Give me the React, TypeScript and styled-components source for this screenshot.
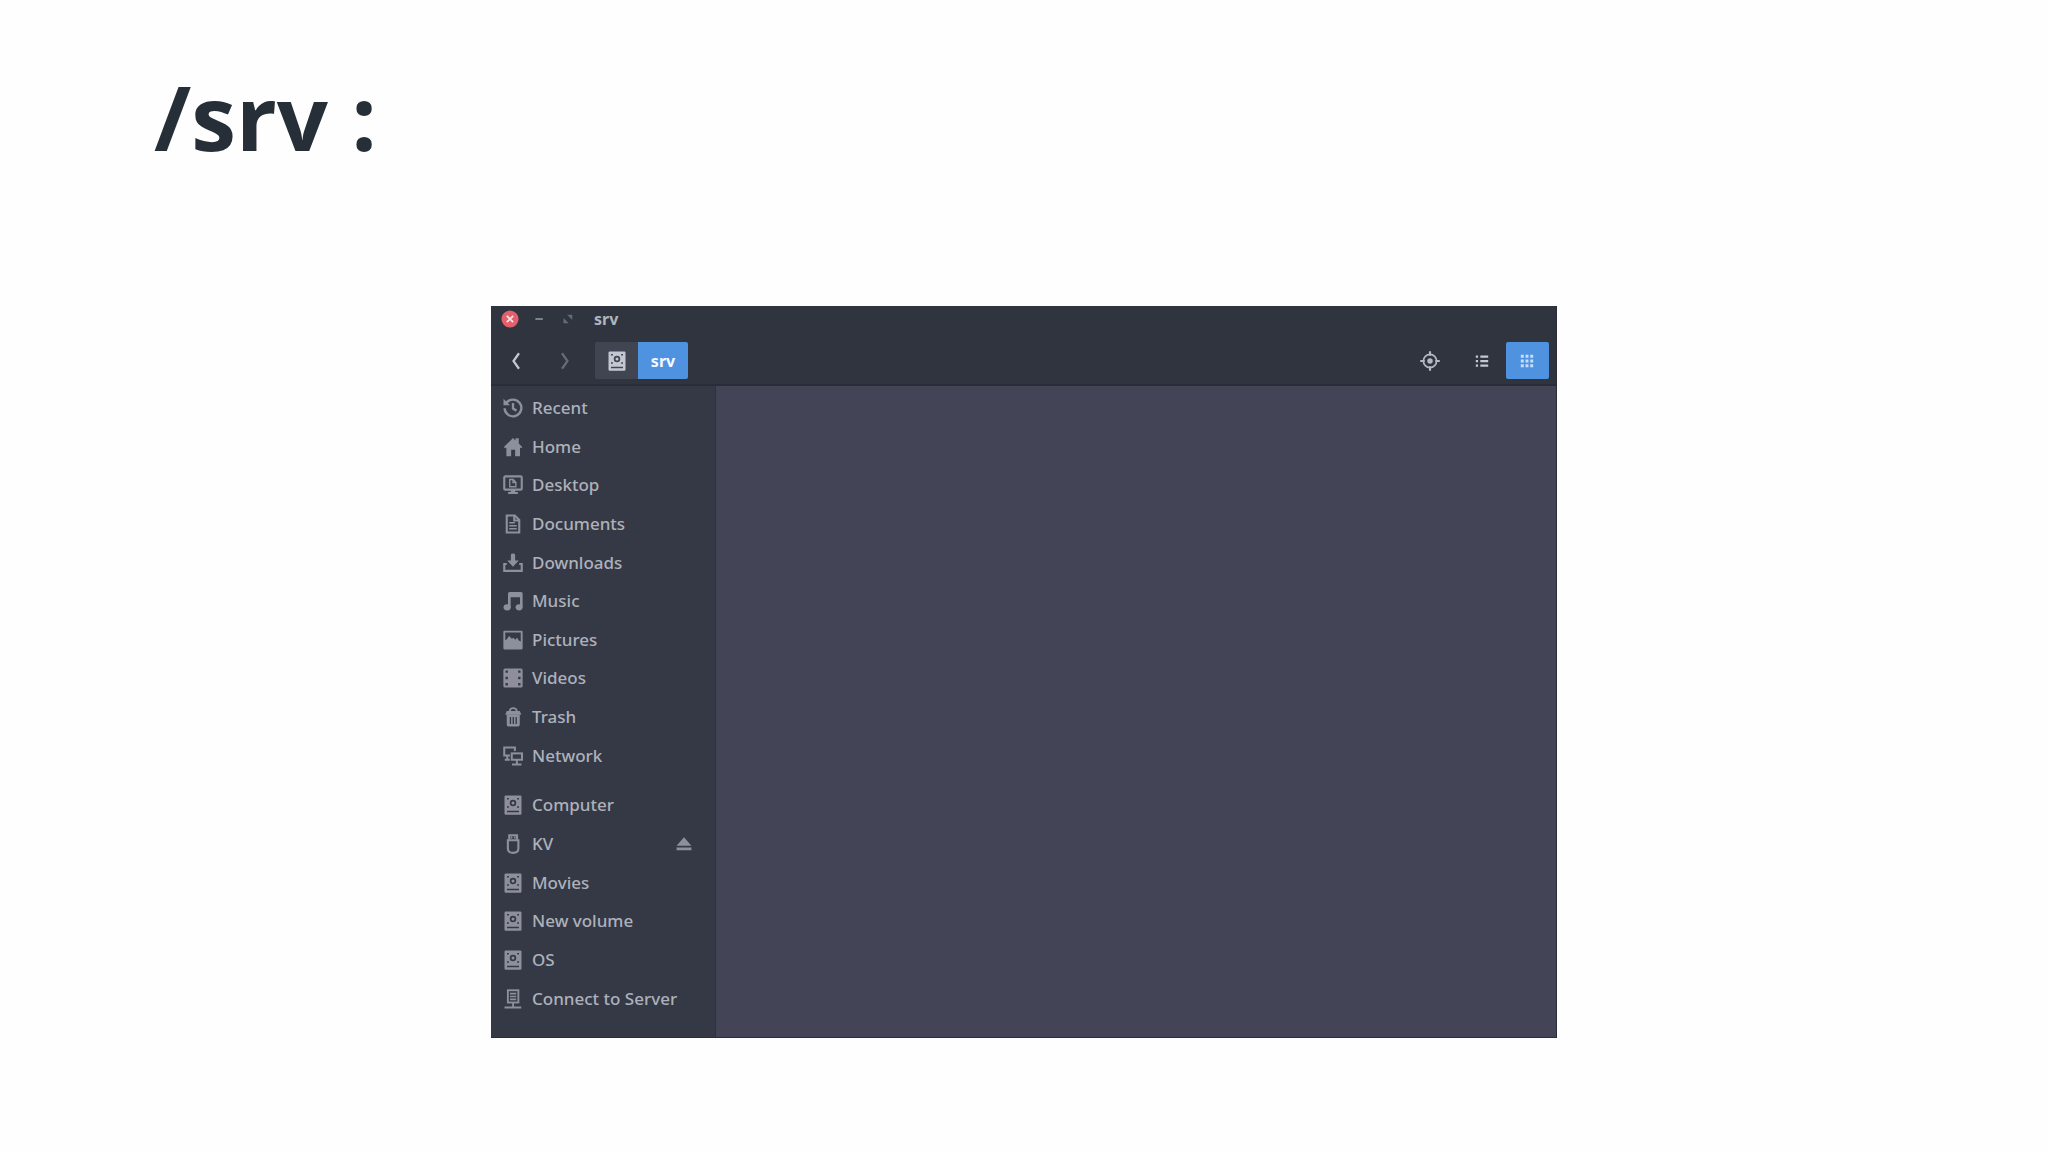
import React from "react";
import styled, { createGlobalStyle } from "styled-components";

const GlobalStyle = createGlobalStyle`
  *, *::before, *::after { box-sizing: border-box; }
  body {
    margin: 0;
    background: #fefefe;
    font-family: "Noto Sans", "Open Sans", sans-serif;
  }
  button { font: inherit; border: 0; padding: 0; background: none; cursor: pointer; }
`;

const Slide = styled.main`
  min-height: 100vh;
  padding: 56px 0;
`;

const Heading = styled.h1`
  margin: 0 0 130px;
  padding-left: 154px;
  font-family: "Open Sans", "Noto Sans", sans-serif;
  font-size: 90px;
  line-height: 120px;
  font-weight: 700;
  color: #262f38;
`;

const Window = styled.section`
  width: calc(52% + 1px);
  min-width: 640px;
  margin: 0 auto;
  background: #434455;
  border: solid #2a2d38;
  border-width: 0 1px 1px 0;
`;

const TitleBar = styled.header`
  display: flex;
  align-items: center;
  height: 25px;
  padding-left: 10px;
  background: #2f343f;
`;

const WindowButton = styled.button<{ $tone: string }>`
  display: flex;
  justify-content: center;
  width: 18px;
  height: 18px;
  margin-right: 11px;
  color: ${(p) => p.$tone};
`;

const WindowTitle = styled.h2`
  margin: 0 0 0 6px;
  font-size: 16px;
  line-height: 24px;
  font-weight: 700;
  color: #b0b4be;
`;

const Toolbar = styled.nav`
  display: flex;
  align-items: center;
  padding: 11px 7px 5px 10px;
  background: #2f343f;
  border-bottom: 2px solid #2a2c38;
`;

const ToolButton = styled.button<{ $width: number; $tone: string; $active?: boolean }>`
  display: flex;
  align-items: center;
  justify-content: center;
  width: ${(p) => p.$width}px;
  height: 37px;
  border-radius: 2px;
  color: ${(p) => p.$tone};
  background: ${(p) => (p.$active ? "#4f92e0" : "transparent")};
`;

const History = styled.div`
  display: flex;
  gap: 20px;
  margin-right: 16px;
`;

const PathBar = styled.div`
  display: flex;
  border-radius: 2px;
  overflow: hidden;
`;

const PathButton = styled.button<{ $current?: boolean }>`
  display: flex;
  align-items: center;
  justify-content: center;
  width: ${(p) => (p.$current ? 50 : 43)}px;
  height: 37px;
  font-size: 16px;
  font-weight: 700;
  color: ${(p) => (p.$current ? "#f4f8ff" : "#c3c7d2")};
  background: ${(p) => (p.$current ? "#4f92e0" : "#414551")};
`;

const Views = styled.div`
  display: flex;
  align-items: center;
  margin-left: auto;
`;

const Body = styled.div`
  display: flex;
`;

const Sidebar = styled.aside`
  flex: 0 0 225px;
  padding: 3px 0 19px;
  background: #353945;
  border-right: 1px solid #2f313e;
`;

const PlaceList = styled.ul<{ $height: number }>`
  display: grid;
  grid-auto-rows: 1fr;
  height: ${(p) => p.$height}px;
  margin: 0 0 11px;
  padding: 0 22px 0 12px;
  list-style: none;
  &:last-child { margin-bottom: 0; }
`;

const Place = styled.li`
  display: flex;
  align-items: center;
  justify-content: space-between;
`;

const PlaceLink = styled.a`
  display: flex;
  align-items: center;
  gap: 9px;
  font-size: 17px;
  line-height: 24px;
  font-weight: 500;
  white-space: nowrap;
  color: #adb1bb;
  text-decoration: none;
  svg { color: #8d909c; }
`;

const EjectButton = styled.button`
  display: flex;
  color: #8d909c;
`;

const Files = styled.div`
  flex: 1;
`;

const icons = {
  recent: (
    <g fill="none" stroke="currentColor" strokeWidth="1.9">
      <path d="M2.6 4A6.7 6.7 0 1 1 1.300 8.200M8 4v4.500l2.800 1.600" />
      <path d="M.4.6v5.200h5.200z" fill="currentColor" stroke="none" />
    </g>
  ),
  home: (
    <path fill="currentColor" d="M8 .8 10 2.700V1h2.600v4.200L15.400 8l-.8 1-1-.7V15.400H9.700V10.200H6.500v5.200H2.700V8.300l-1 .7-1-1z" />
  ),
  desktop: (
    <g fill="none" stroke="currentColor" strokeWidth="1.700">
      <rect x="1" y="1.100" width="14" height="10.600" rx=".8" />
      <path d="M5.400 3.600h2.700l2.200 2.200v3.600H5.400zM8 3.600V6h2.300" strokeWidth="1.100" />
      <path d="M6.200 12h3.600v1.600h2.100v1.600H4.100v-1.600h2.100z" fill="currentColor" stroke="none" />
    </g>
  ),
  documents: (
    <g fill="none" stroke="currentColor" strokeWidth="1.700">
      <path d="M3 1.200h6.400L13 4.800v10H3z" />
      <path d="M9 1v4.200h4.200" />
      <path d="M5 7h4.500M5 9.300h6M5 11.700h6" strokeWidth="1.200" />
    </g>
  ),
  downloads: (
    <g>
      <path d="M6.300 1.500q0-1.100 1.700-1.100t1.700 1.100v4.400h2.900L8 11 3.400 5.900h2.900z" fill="currentColor" />
      <path d="M3 8.800H1v5.500h14V8.800h-2" fill="none" stroke="currentColor" strokeWidth="1.700" />
    </g>
  ),
  music: (
    <g fill="currentColor">
      <path d="M4 2Q4 .8 5.200.8h9.200q1.300 0 1.300 1.200V13h-2.100V5H6.100v8H4z" />
      <ellipse cx="3.300" cy="13" rx="2.900" ry="2.500" />
      <ellipse cx="12.900" cy="13" rx="2.800" ry="2.500" />
    </g>
  ),
  pictures: (
    <path
      fill="currentColor"
      fillRule="evenodd"
      d="M1.200.500h13.600q.9 0 .9.900v13.200q0 .9-.9.900H1.200q-.9 0-.9-.9V1.400q0-.9.900-.9zM1.800 2v6.200l1.400-1 1.700-2.400 2.200 2.200 1.300-.8 1.300 1.500 1.600-1.500 1.400 2.200 1.500.7V2z"
    />
  ),
  videos: (
    <path
      fill="currentColor"
      fillRule="evenodd"
      d="M1.600.400h12.800q1.300 0 1.300 1.300v12.600q0 1.300-1.300 1.300H1.600q-1.300 0-1.300-1.300V1.700Q.300.400 1.600.400zM2 2v1.800h1.900V2zm0 5v1.900h1.900V7zm0 5v1.900h1.900V12zM12.100 2v1.800H14V2zm0 5v1.900H14V7zm0 5v1.900H14V12z"
    />
  ),
  trash: (
    <g>
      <path d="M5.400 3.200Q5.600.9 8.200.9t2.800 2.300" fill="none" stroke="currentColor" strokeWidth="1.400" />
      <path d="M3 3.200h10.400l1.300 2.900H1.800z" fill="currentColor" />
      <path fill="currentColor" fillRule="evenodd" d="M3 6h10.400v8.200q0 1.300-1.300 1.300H4.300Q3 15.500 3 14.200zM5.400 8v5.500h1.100V8zm2.300 0v5.500h1.100V8zm2.300 0v5.500h1.100V8z" />
    </g>
  ),
  network: (
    <g fill="none" stroke="currentColor" strokeWidth="1.600">
      <path d="M9.500 4V1.200H1V7.500h4.600M3.400 7.500V11M1.400 11h4" />
      <rect x="7" y="5.900" width="8.200" height="5.100" />
      <path d="M11.100 11v3.600M7.200 14.800h7.600" />
    </g>
  ),
  drive: (
    <g>
      <path
        fill="currentColor"
        fillRule="evenodd"
        d="M2.200.300h11.600q1 0 1 1v13.400q0 1-1 1H2.200q-1 0-1-1V1.300q0-1 1-1zM3.200 12.500v1.200h9.600v-1.200zM8 3.700a2.600 2.600 0 1 0 0 5.200 2.600 2.600 0 1 0 0-5.200zM3.200 2.300v1.300h1.500V2.300zm8.100 0v1.300h1.500V2.300zM3.200 8.900v1.300h1.500V8.900zm8.100 0v1.300h1.500V8.900z"
      />
      <circle cx="8" cy="6.300" r="1.200" fill="currentColor" />
    </g>
  ),
  usb: (
    <g fill="none" stroke="currentColor" strokeWidth="1.700">
      <path d="M5 4.500V1h6.200v3.500" />
      <path d="M3.900 5h8.400v6.600q0 3.500-4.200 3.500t-4.200-3.500z" />
      <path d="M6.200 2.800h1.300M8.800 2.800h1.300" />
    </g>
  ),
  server: (
    <g fill="none" stroke="currentColor" strokeWidth="1.500">
      <rect x="3.900" y="1" width="8.400" height="9.800" />
      <path d="M5.600 3.700h5M5.600 6h5M5.600 8.300h5" strokeWidth="1.300" />
      <path d="M8.100 11v3.300M1.200 14.800h13.400" />
    </g>
  ),
  eject: (
    <path fill="currentColor" d="M8 2 14.600 9.600H1.400zM1.400 11.200h13.200v2.300H1.400z" />
  ),
  close: (
    <g>
      <circle cx="8" cy="8" r="7.600" fill="#e2606c" />
      <path d="m5.200 5.200 5.600 5.600m0-5.600-5.600 5.600" stroke="#f8dfe3" strokeWidth="1.700" />
    </g>
  ),
  minimize: <path d="M4.800 8h6.600" stroke="currentColor" strokeWidth="1.800" />,
  maximize: (
    <path fill="currentColor" d="M7.200 4.200h4.600v4.600zM4 7.200v4.600h4.600z" />
  ),
  back: <path d="M10.400 1.800 6 8l4.400 6.200" fill="none" stroke="currentColor" strokeWidth="1.800" />,
  forward: <path d="M5.600 1.800 10 8l-4.400 6.200" fill="none" stroke="currentColor" strokeWidth="1.800" />,
  locate: (
    <g fill="none" stroke="currentColor" strokeWidth="1.300">
      <circle cx="8" cy="8" r="5.300" />
      <circle cx="8" cy="8" r="2.200" fill="currentColor" stroke="none" />
      <path d="M8 .2v3.600M8 12.200v3.600M.2 8h3.600M12.200 8h3.600" strokeWidth="1.700" />
    </g>
  ),
  list: (
    <path fill="currentColor" d="M2.500 3h2v2h-2zM6.500 3h7v2h-7zM2.500 7h2v2h-2zM6.500 7h7v2h-7zM2.500 11h2v2h-2zM6.500 11h7v2h-7z" />
  ),
  grid: (
    <path
      fill="currentColor"
      d="M2.500 2.500h2.600v2.600H2.500zM6.700 2.500h2.600v2.600H6.700zM10.900 2.500h2.600v2.600h-2.600zM2.500 6.700h2.600v2.600H2.500zM6.700 6.700h2.600v2.600H6.700zM10.900 6.700h2.600v2.600h-2.600zM2.500 10.900h2.600v2.600H2.500zM6.700 10.900h2.600v2.600H6.700zM10.900 10.900h2.600v2.600h-2.600z"
    />
  ),
};

type IconName = keyof typeof icons;

function Icon({ name, size = 20 }: { name: IconName; size?: number }) {
  return (
    <svg width={size} height={size} viewBox="0 0 16 16" aria-hidden="true">
      {icons[name]}
    </svg>
  );
}

type PlaceItem = { label: string; icon: IconName; ejectable?: boolean };

const places: PlaceItem[] = [
  { label: "Recent", icon: "recent" },
  { label: "Home", icon: "home" },
  { label: "Desktop", icon: "desktop" },
  { label: "Documents", icon: "documents" },
  { label: "Downloads", icon: "downloads" },
  { label: "Music", icon: "music" },
  { label: "Pictures", icon: "pictures" },
  { label: "Videos", icon: "videos" },
  { label: "Trash", icon: "trash" },
  { label: "Network", icon: "network" },
];

const devices: PlaceItem[] = [
  { label: "Computer", icon: "drive" },
  { label: "KV", icon: "usb", ejectable: true },
  { label: "Movies", icon: "drive" },
  { label: "New volume", icon: "drive" },
  { label: "OS", icon: "drive" },
  { label: "Connect to Server", icon: "server" },
];

function Places({ items, height }: { items: PlaceItem[]; height: number }) {
  return (
    <PlaceList $height={height}>
      {items.map((item) => (
        <Place key={item.label}>
          <PlaceLink href="#">
            <Icon name={item.icon} />
            {item.label}
          </PlaceLink>
          {item.ejectable && (
            <EjectButton aria-label={`Eject ${item.label}`}>
              <Icon name="eject" size={18} />
            </EjectButton>
          )}
        </Place>
      ))}
    </PlaceList>
  );
}

export default function App() {
  return (
    <>
      <GlobalStyle />
      <Slide>
        <Heading>/srv :</Heading>
        <Window aria-label="File manager">
          <TitleBar>
            <WindowButton $tone="#e2606c" aria-label="Close"><Icon name="close" size={18} /></WindowButton>
            <WindowButton $tone="#7d818c" aria-label="Minimize"><Icon name="minimize" size={18} /></WindowButton>
            <WindowButton $tone="#666b77" aria-label="Maximize"><Icon name="maximize" size={18} /></WindowButton>
            <WindowTitle>srv</WindowTitle>
          </TitleBar>
          <Toolbar>
            <History>
              <ToolButton $width={29} $tone="#c3c7d2" aria-label="Back"><Icon name="back" /></ToolButton>
              <ToolButton $width={29} $tone="#666b77" aria-label="Forward"><Icon name="forward" /></ToolButton>
            </History>
            <PathBar>
              <PathButton aria-label="File system root"><Icon name="drive" /></PathButton>
              <PathButton $current>srv</PathButton>
            </PathBar>
            <Views>
              <ToolButton $width={56} $tone="#b4b8c3" aria-label="Locate"><Icon name="locate" /></ToolButton>
              <ToolButton $width={48} $tone="#c3c7d2" aria-label="List view"><Icon name="list" size={18} /></ToolButton>
              <ToolButton $width={43} $tone="#c6e0fb" $active aria-label="Icon view"><Icon name="grid" size={18} /></ToolButton>
            </Views>
          </Toolbar>
          <Body>
            <Sidebar>
              <Places items={places} height={386} />
              <Places items={devices} height={232} />
            </Sidebar>
            <Files />
          </Body>
        </Window>
      </Slide>
    </>
  );
}
